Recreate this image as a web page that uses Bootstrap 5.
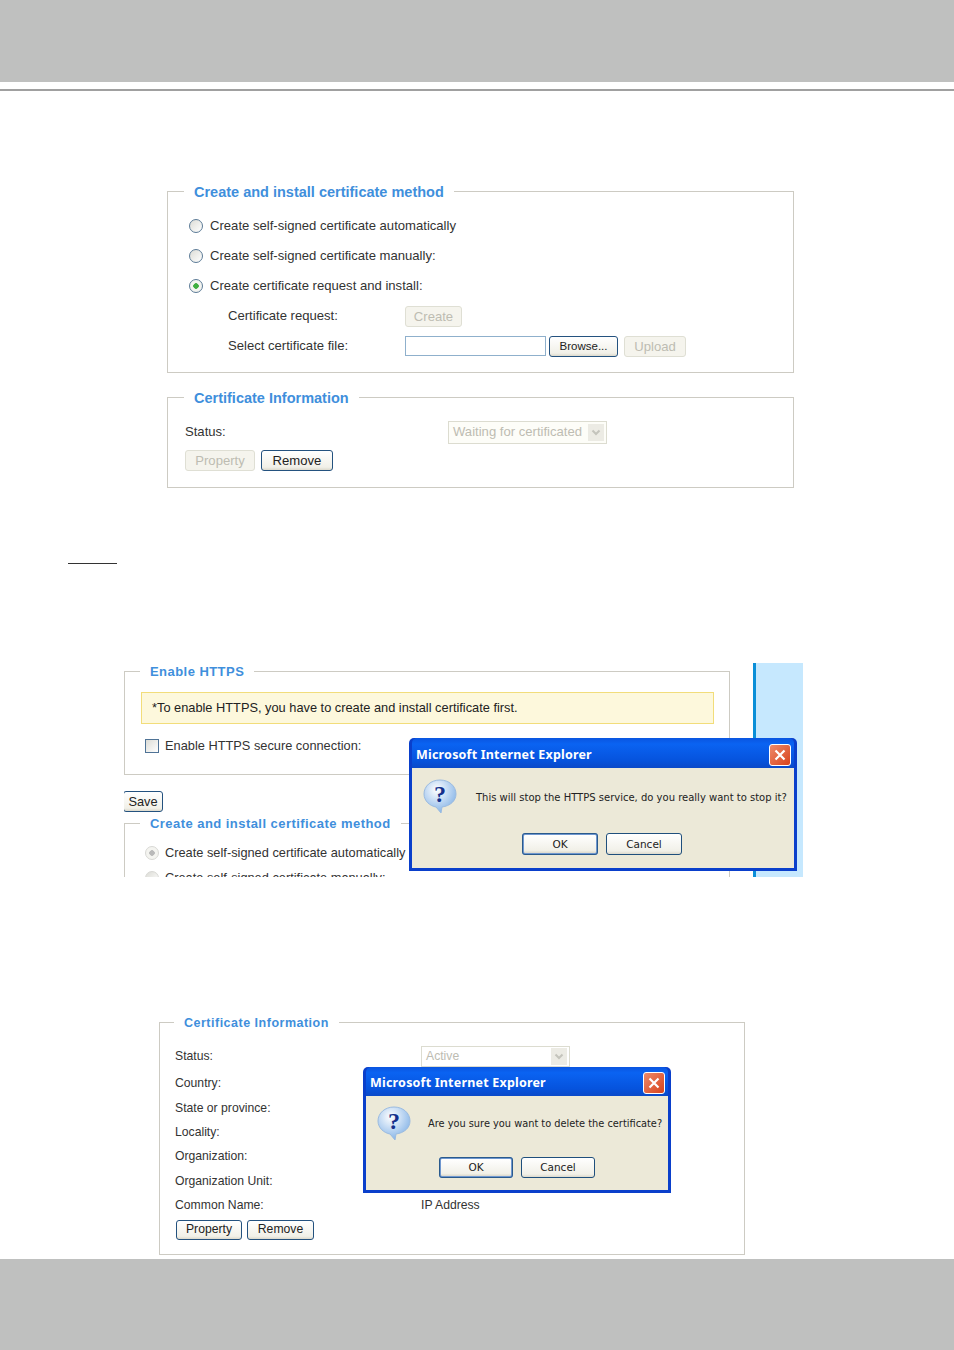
<!DOCTYPE html>
<html lang="en">
<head>
    <meta charset="UTF-8">
    <meta name="viewport" content="width=device-width, initial-scale=1.0">
    <title>HTTPS certificate settings</title>
    <link href="https://cdn.jsdelivr.net/npm/bootstrap@5.3.0/dist/css/bootstrap.min.css" rel="stylesheet">
    <style>
        body {
            background: #fff;
            color: #333;
            font-family: "Liberation Sans", Arial, sans-serif;
            font-size: 12.8px;
            line-height: 16px;
        }

        .page-wrap { width: 954px; height: 1350px; overflow: hidden; }
        .band-top { height: 82px; background: #bfc0bf; }
        .band-rule { height: 2px; margin-top: 7px; background: #a0a0a0; }
        .band-bottom { height: 91px; background: #bfc0bf; }
        .page-main { height: 1168px; }

        /* fieldsets from the camera web ui */
        .ui-set {
            border: 1px solid #cdcbc3;
            min-width: 0;
        }
        .ui-set legend {
            float: none;
            width: auto;
            margin: 0 0 0 -1px;
            padding: 2px 10px 0;
            font-size: 14.5px;
            line-height: 16px;
            font-weight: 700;
            color: #3f8fdc;
        }

        .shot-one { margin: 91px 0 0 167px; width: 627px; font-size: 13.1px; }
        .shot-one .ui-set { height: 191px; padding: 11px 0 0 21px; }
        .shot-one .ui-set legend { margin-left: -5px; }
        .shot-one .ui-set + .ui-set { height: 100px; margin-top: 15px; padding: 8px 0 0 17px; }
        .shot-one .ui-set + .ui-set legend { margin-left: -1px; }
        .shot-one .row-first { margin-bottom: 2px; }
        .row-30 { height: 30px; }
        .row-sub { padding-left: 39px; }
        .label-sub { width: 177px; }
        .label-status { width: 263px; }

        .xp-radio {
            appearance: none;
            width: 14px;
            height: 14px;
            margin: 0 7px 0 0;
            flex: none;
            border: 1.5px solid #5b7a96;
            border-radius: 50%;
            background: linear-gradient(135deg, #dcdcd6, #fff);
        }
        .xp-radio:checked {
            background: radial-gradient(circle, #3fae3f 0 2.5px, #f4f4f0 3px);
        }
        .xp-radio.is-off { border-color: #d8d8d4; margin-right: 6px; }
        .xp-radio.is-off:checked { background: radial-gradient(circle, #b9b9b9 0 2.5px, #f4f4f0 3px); }

        .xp-check {
            appearance: none;
            width: 14px;
            height: 14px;
            margin: 0 6px 0 4px;
            flex: none;
            border: 1.5px solid #4f7396;
            background: linear-gradient(135deg, #dcdcd6, #fff);
        }

        .xp-btn {
            height: 21px;
            padding: 0 10px;
            font-size: inherit;
            line-height: 17px;
            color: #222;
            border: 1.5px solid #24527f;
            border-radius: 3px;
            background: linear-gradient(#fff, #f1f0e8 85%, #dcd9cc);
        }
        .xp-btn:disabled {
            color: #bdbcb2;
            border-color: #dfdfd4;
            background: #f5f4ed;
            opacity: 1;
        }
        .btn-create { width: 57px; padding: 0; }
        .btn-browse { width: 69px; margin: 0 6px 0 3px; font-size: 11.5px; padding: 0; }
        .btn-upload { width: 62px; padding: 0; }
        .btn-prop { width: 70px; padding: 0; margin-right: 6px; }
        .btn-remove { width: 72px; padding: 0; }
        .file-box { width: 141px; height: 20px; border: 1px solid #8fb0cc; background: #fff; }

        .fake-select {
            height: 23px;
            border: 1px solid #dcdcd0;
            color: #bdbcb2;
            background: #fff;
            padding: 0 2px 0 4px;
        }
        .fake-select svg { flex: none; }
        .sel-wait { width: 159px; background: #fdfdf8; }
        .sel-active { width: 149px; height: 21px; }

        .note-rule { width: 49px; height: 1px; margin: 75px 0 0 68px; background: #333; }

        .shot-two { height: 214px; margin: 99px 0 0 124px; width: 679px; overflow: hidden; }
        .shot-two .col-form { width: 606px; flex: none; }
        .shot-two .ui-set { padding: 0 0 0 16px; }
        .shot-two .ui-set legend { font-size: 13px; letter-spacing: .45px; }
        .set-https { height: 113px; margin-top: -1px; }
        .set-method { height: 100px; margin-top: 2px; padding-left: 20px !important; border-bottom: 0 !important; }
        .shot-two .set-method legend { margin-left: -5px; }
        .set-method .row-24:first-of-type { margin-top: 9px; }
        .warn-bar {
            width: 573px;
            height: 32px;
            margin-top: 12px;
            padding-left: 10px;
            background: #fdf8dc;
            border: 1px solid #f2dd7a;
            color: #222;
        }
        .check-row { margin-top: 14px; }
        .save-row { height: 21px; margin: 16px 0 0 -1px; }
        .btn-save { width: 40px; padding: 0; }
        .side-strip {
            width: 50px;
            margin-left: 23px;
            background: #c6e8fe;
            border-left: 3px solid #0a8fd8;
        }

        .ie-dialog {
            position: absolute;
            border: 0;
            border-radius: 5px 5px 0 0;
            background: #0a3fcb;
            padding: 0 3px 3px;
            font-family: "DejaVu Sans", sans-serif;
            color: #222;
        }
        .ie-title {
            height: 30px;
            flex: none;
            padding: 3px 3px 0 4px;
            border: 0;
            border-radius: 5px 5px 0 0;
            background: linear-gradient(#0a55e0, #0a63f2 20%, #0653dd 75%, #0a49c8);
            color: #fff;
            font-family: "Noto Sans", sans-serif;
            font-size: 12.5px;
            font-weight: 700;
            letter-spacing: .2px;
        }
        .ie-close {
            width: 22px;
            height: 22px;
            border: 1px solid #fff;
            border-radius: 3px;
            background: linear-gradient(135deg, #ee8a6a, #d8431c);
        }
        .ie-body { background: #ece9d8; border-radius: 0; }
        .ie-icon { flex: none; }
        .ie-msg { font-size: 10px; white-space: nowrap; }
        .ie-btn {
            width: 76px;
            height: 22px;
            padding: 0;
            font-family: "DejaVu Sans", sans-serif;
            font-size: 10.5px;
            border-color: #1f4f7c;
        }
        .ie-btn.is-default { border: 2px solid #6f97cf; outline: 1px solid #2a5a8c; outline-offset: -1px; }

        .dlg-stop { left: 409px; top: 738px; width: 388px; height: 133px; }
        .dlg-stop .ie-icon { margin: 11px 0 0 11px; }
        .dlg-stop .ie-msg { margin: 22px 0 0 19px; }
        .dlg-stop .ie-btns { padding: 0 0 0 110px; margin-top: 20px; }
        .dlg-del { left: 363px; top: 1067px; width: 308px; height: 126px; }
        .dlg-del .ie-title { height: 29px; }
        .dlg-del .ie-icon { margin: 10px 0 0 11px; }
        .dlg-del .ie-msg { margin: 20px 0 0 17px; font-size: 9.8px; }
        .dlg-del .ie-btns { padding: 0 0 0 73px; margin-top: 17px; }
        .dlg-del .ie-btn { width: 74px; height: 21px; }
        .ie-btns { gap: 8px; }

        .shot-three { margin: 136px 0 0 159px; width: 586px; font-size: 12.2px; }
        .shot-three .ui-set { height: 242px; padding: 0 0 0 15px; }
        .shot-three .ui-set legend { font-size: 12.5px; letter-spacing: .5px; }
        .shot-three .btn-prop { width: 66px; height: 20px; margin: 0 5px 0 1px; }
        .shot-three .btn-remove { width: 67px; height: 20px; }
        .row-24 { height: 24.4px; }
        .label-cert { width: 246px; }
        .row-first { margin-top: 2px; height: 32px; }
        .shot-three .row-first { margin-top: 10px; height: 30px; }
        .row-btns { height: 25px; }
    </style>
</head>
<body>

<div class="page-wrap position-relative d-flex flex-column">
    <div class="band-top"></div>
    <div class="band-rule"></div>

    <div class="page-main">
        <!-- first screenshot -->
        <div class="shot-one">
            <fieldset class="ui-set">
                <legend>Create and install certificate method</legend>
                <div class="row-30 d-flex align-items-center"><input type="radio" class="xp-radio" name="m1">Create self-signed certificate automatically</div>
                <div class="row-30 d-flex align-items-center"><input type="radio" class="xp-radio" name="m1">Create self-signed certificate manually:</div>
                <div class="row-30 d-flex align-items-center"><input type="radio" class="xp-radio" name="m1" checked>Create certificate request and install:</div>
                <div class="row-30 row-sub d-flex align-items-center">
                    <span class="label-sub">Certificate request:</span>
                    <button class="btn xp-btn btn-create" disabled>Create</button>
                </div>
                <div class="row-30 row-sub d-flex align-items-center">
                    <span class="label-sub">Select certificate file:</span>
                    <span class="file-box"></span>
                    <button class="btn xp-btn btn-browse">Browse...</button>
                    <button class="btn xp-btn btn-upload" disabled>Upload</button>
                </div>
            </fieldset>
            <fieldset class="ui-set">
                <legend>Certificate Information</legend>
                <div class="row-first d-flex align-items-center">
                    <span class="label-status">Status:</span>
                    <span class="fake-select sel-wait d-flex align-items-center justify-content-between">Waiting for certificated
                        <svg width="16" height="17" viewBox="0 0 16 17"><rect width="16" height="17" fill="#ecebe4"/><path d="M4.5 6.500 8 10l3.500-3.500" fill="none" stroke="#c4c4bc" stroke-width="2"/></svg>
                    </span>
                </div>
                <div class="d-flex align-items-center">
                    <button class="btn xp-btn btn-prop" disabled>Property</button>
                    <button class="btn xp-btn btn-remove">Remove</button>
                </div>
            </fieldset>
        </div>

        <div class="note-rule"></div>

        <!-- second screenshot -->
        <div class="shot-two d-flex">
            <div class="col-form">
                <fieldset class="ui-set set-https">
                    <legend>Enable HTTPS</legend>
                    <div class="warn-bar d-flex align-items-center">*To enable HTTPS, you have to create and install certificate first.</div>
                    <div class="check-row d-flex align-items-center"><input type="checkbox" class="xp-check">Enable HTTPS secure connection:</div>
                </fieldset>
                <div class="save-row"><button class="btn xp-btn btn-save">Save</button></div>
                <fieldset class="ui-set set-method">
                    <legend>Create and install certificate method</legend>
                    <div class="row-24 d-flex align-items-center"><input type="radio" class="xp-radio is-off" name="m2" checked disabled>Create self-signed certificate automatically</div>
                    <div class="row-24 d-flex align-items-center"><input type="radio" class="xp-radio is-off" name="m2" disabled>Create self-signed certificate manually:</div>
                </fieldset>
            </div>
            <div class="side-strip"></div>
        </div>

        <!-- third screenshot -->
        <div class="shot-three">
            <fieldset class="ui-set">
                <legend>Certificate Information</legend>
                <div class="row-first d-flex align-items-center">
                    <span class="label-cert">Status:</span>
                    <span class="fake-select sel-active d-flex align-items-center justify-content-between">Active
                        <svg width="16" height="17" viewBox="0 0 16 17"><rect width="16" height="17" fill="#ecebe4"/><path d="M4.5 6.500 8 10l3.500-3.500" fill="none" stroke="#c4c4bc" stroke-width="2"/></svg>
                    </span>
                </div>
                <div class="row-24 d-flex align-items-center">Country:</div>
                <div class="row-24 d-flex align-items-center">State or province:</div>
                <div class="row-24 d-flex align-items-center">Locality:</div>
                <div class="row-24 d-flex align-items-center">Organization:</div>
                <div class="row-24 d-flex align-items-center">Organization Unit:</div>
                <div class="row-24 d-flex align-items-center"><span class="label-cert">Common Name:</span><span>IP Address</span></div>
                <div class="row-btns d-flex align-items-center">
                    <button class="btn xp-btn btn-prop">Property</button>
                    <button class="btn xp-btn btn-remove">Remove</button>
                </div>
            </fieldset>
        </div>
    </div>

    <div class="band-bottom mt-auto"></div>

    <!-- dialogs sit on top of the form shots -->
    <div class="ie-dialog dlg-stop d-flex flex-column">
        <div class="ie-title d-flex align-items-center justify-content-between">
            <span>Microsoft Internet Explorer</span>
            <span class="ie-close d-flex align-items-center justify-content-center">
                <svg width="12" height="12" viewBox="0 0 12 12"><path d="M1.500 1.500l9 9m0-9l-9 9" stroke="#fff" stroke-width="2.200" fill="none"/></svg>
            </span>
        </div>
        <div class="ie-body flex-grow-1">
            <div class="d-flex">
                <svg class="ie-icon" width="34" height="34" viewBox="0 0 34 34">
                    <defs><radialGradient id="q1" cx="40%" cy="30%" r="75%"><stop offset="0" stop-color="#fff"/><stop offset="1" stop-color="#7fb0e6"/></radialGradient></defs>
                    <path d="M17 1C8 1 1 7 1 15c0 7 6 12 12 13l5 6 1-6c8-1 14-6 14-13C33 7 26 1 17 1z" fill="url(#q1)" stroke="#9bbbe0"/>
                    <text x="17" y="23" text-anchor="middle" font-family="Liberation Serif, serif" font-size="24" font-weight="700" fill="#14308c">?</text>
                </svg>
                <div class="ie-msg">This will stop the HTTPS service, do you really want to stop it?</div>
            </div>
            <div class="ie-btns d-flex">
                <button class="btn xp-btn ie-btn is-default">OK</button>
                <button class="btn xp-btn ie-btn">Cancel</button>
            </div>
        </div>
    </div>

    <div class="ie-dialog dlg-del d-flex flex-column">
        <div class="ie-title d-flex align-items-center justify-content-between">
            <span>Microsoft Internet Explorer</span>
            <span class="ie-close d-flex align-items-center justify-content-center">
                <svg width="12" height="12" viewBox="0 0 12 12"><path d="M1.500 1.500l9 9m0-9l-9 9" stroke="#fff" stroke-width="2.200" fill="none"/></svg>
            </span>
        </div>
        <div class="ie-body flex-grow-1">
            <div class="d-flex">
                <svg class="ie-icon" width="34" height="34" viewBox="0 0 34 34">
                    <defs><radialGradient id="q2" cx="40%" cy="30%" r="75%"><stop offset="0" stop-color="#fff"/><stop offset="1" stop-color="#7fb0e6"/></radialGradient></defs>
                    <path d="M17 1C8 1 1 7 1 15c0 7 6 12 12 13l5 6 1-6c8-1 14-6 14-13C33 7 26 1 17 1z" fill="url(#q2)" stroke="#9bbbe0"/>
                    <text x="17" y="23" text-anchor="middle" font-family="Liberation Serif, serif" font-size="24" font-weight="700" fill="#14308c">?</text>
                </svg>
                <div class="ie-msg">Are you sure you want to delete the certificate?</div>
            </div>
            <div class="ie-btns d-flex">
                <button class="btn xp-btn ie-btn is-default">OK</button>
                <button class="btn xp-btn ie-btn">Cancel</button>
            </div>
        </div>
    </div>
</div>

<script src="https://cdn.jsdelivr.net/npm/bootstrap@5.3.0/dist/js/bootstrap.bundle.min.js"></script>

</body>
</html>
